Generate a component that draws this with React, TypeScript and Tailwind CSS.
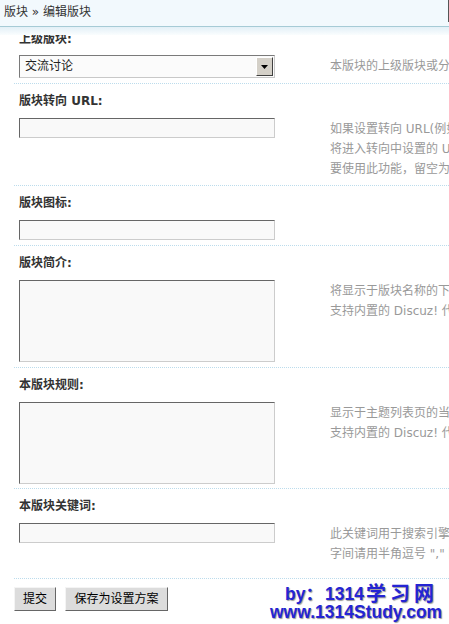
const font = "font-['DejaVu_Sans','Noto_Sans_CJK_SC',sans-serif]";

type FieldProps = {
  label: string;
  labelClass?: string;
  rowClass: string;
  tips: string[];
  children: React.ReactNode;
};

function Field({ label, labelClass = "h-[34px] pt-[8px]", rowClass, tips, children }: FieldProps) {
  return (
    <div className="border-b border-dotted border-[#bcdcec]">
      <div className={"pl-[5px] font-bold text-[#333] leading-[18px] " + labelClass}>{label}</div>
      <div className={"flex pl-[5px] " + rowClass}>
        <div className="w-[311px] shrink-0">{children}</div>
        <div className="pt-[1px] leading-[20px] text-[#999] whitespace-nowrap">
          {tips.map((t) => (
            <div key={t}>{t}</div>
          ))}
        </div>
      </div>
    </div>
  );
}

const txt =
  "block w-[256px] border border-solid border-t-[#666] border-l-[#666] border-r-[#ccc] border-b-[#ccc] bg-[#f9f9f9]";

export default function App() {
  return (
    <div className={"relative w-full h-[624px] overflow-hidden bg-white text-[12px] " + font}>
      <div className="relative h-[27px] bg-[#f2f9fd] border-b border-[#a6cbd6] pl-[4px] leading-[24px] text-[#333]">
        版块 » 编辑版块
        <span className="absolute right-0 top-0 h-[22px] w-px bg-[#555]" />
      </div>

      <div className="ml-[14px]">
        <Field label="上级版块:" labelClass="h-[28px] pt-[3px]" rowClass="h-[28px]" tips={["本版块的上级版块或分类"]}>
          <div className="flex h-[23px] w-[256px] border border-solid border-t-[#7a7a7a] border-l-[#7a7a7a] border-r-[#c8c8c8] border-b-[#c8c8c8] bg-[#fbfbfb]">
            <div className="flex-1 pl-[5px] leading-[21px] text-[#222]">交流讨论</div>
            <div className="my-[1px] mr-[1px] flex w-[17px] items-center justify-center border border-solid border-t-white border-l-white border-r-[#404040] border-b-[#404040] bg-[#d4d0c8]">
              <svg width="7" height="4" viewBox="0 0 7 4">
                <polygon points="0,0 7,0 3.5,4" fill="#000" />
              </svg>
            </div>
          </div>
        </Field>

        <Field
          label="版块转向 URL:"
          rowClass="h-[67px]"
          tips={[
            "如果设置转向 URL(例如 http://www.comsenz.com)，用户点击本分",
            "将进入转向中设置的 URL。一旦设定将无法进入版块页面，请确认是否需",
            "要使用此功能，留空为不设置转向 URL",
          ]}
        >
          <div className={txt + " h-[20px]"} />
        </Field>

        <Field label="版块图标:" rowClass="h-[25px]" tips={[]}>
          <div className={txt + " h-[20px]"} />
        </Field>

        <Field
          label="版块简介:"
          rowClass="h-[87px]"
          tips={["将显示于版块名称的下面，提供对本版块的简短描述", "支持内置的 Discuz! 代码"]}
        >
          <div className={txt + " h-[82px]"} />
        </Field>

        <Field
          label="本版块规则:"
          rowClass="h-[86px]"
          tips={["显示于主题列表页的当前版块规则，留空为不显示", "支持内置的 Discuz! 代码"]}
        >
          <div className={txt + " h-[82px]"} />
        </Field>

        <Field
          label="本版块关键词:"
          rowClass="h-[55px]"
          tips={["此关键词用于搜索引擎优化，放在 meta 的 keyword 标签中，多个关键", "字间请用半角逗号 \",\" 隔开"]}
        >
          <div className={txt + " h-[20px]"} />
        </Field>

        <div className="mt-[8px] flex gap-[9px]">
          <button className="h-[24px] w-[42px] border border-solid border-t-[#f4f4f4] border-l-[#f4f4f4] border-r-[#666] border-b-[#666] bg-[#dcdcdc] text-[12px] text-black">
            提交
          </button>
          <button className="h-[24px] w-[103px] border border-solid border-t-[#f4f4f4] border-l-[#f4f4f4] border-r-[#666] border-b-[#666] bg-[#dcdcdc] text-[12px] text-black">
            保存为设置方案
          </button>
        </div>
      </div>

      <div className="absolute left-0 right-0 top-[27px] h-[8px] bg-linear-to-b from-[#e3f0f7] to-[#fafdfe]" />

      {/* watermark */}
      <div className="absolute left-[270px] top-[585px] font-['Liberation_Sans','Noto_Sans_CJK_SC',sans-serif] text-[17.5px] font-bold leading-[18px] text-[#2424d4] [text-shadow:1px_1px_1px_#9a9a9a]">
        <div className="flex items-end pl-[15px]">
          <span className="w-[40px]">by：</span>
          <span>1314</span>
          <span className="ml-[2px] text-[20px] tracking-[4px]">学习网</span>
        </div>
        <div>www.1314Study.com</div>
      </div>
    </div>
  );
}
